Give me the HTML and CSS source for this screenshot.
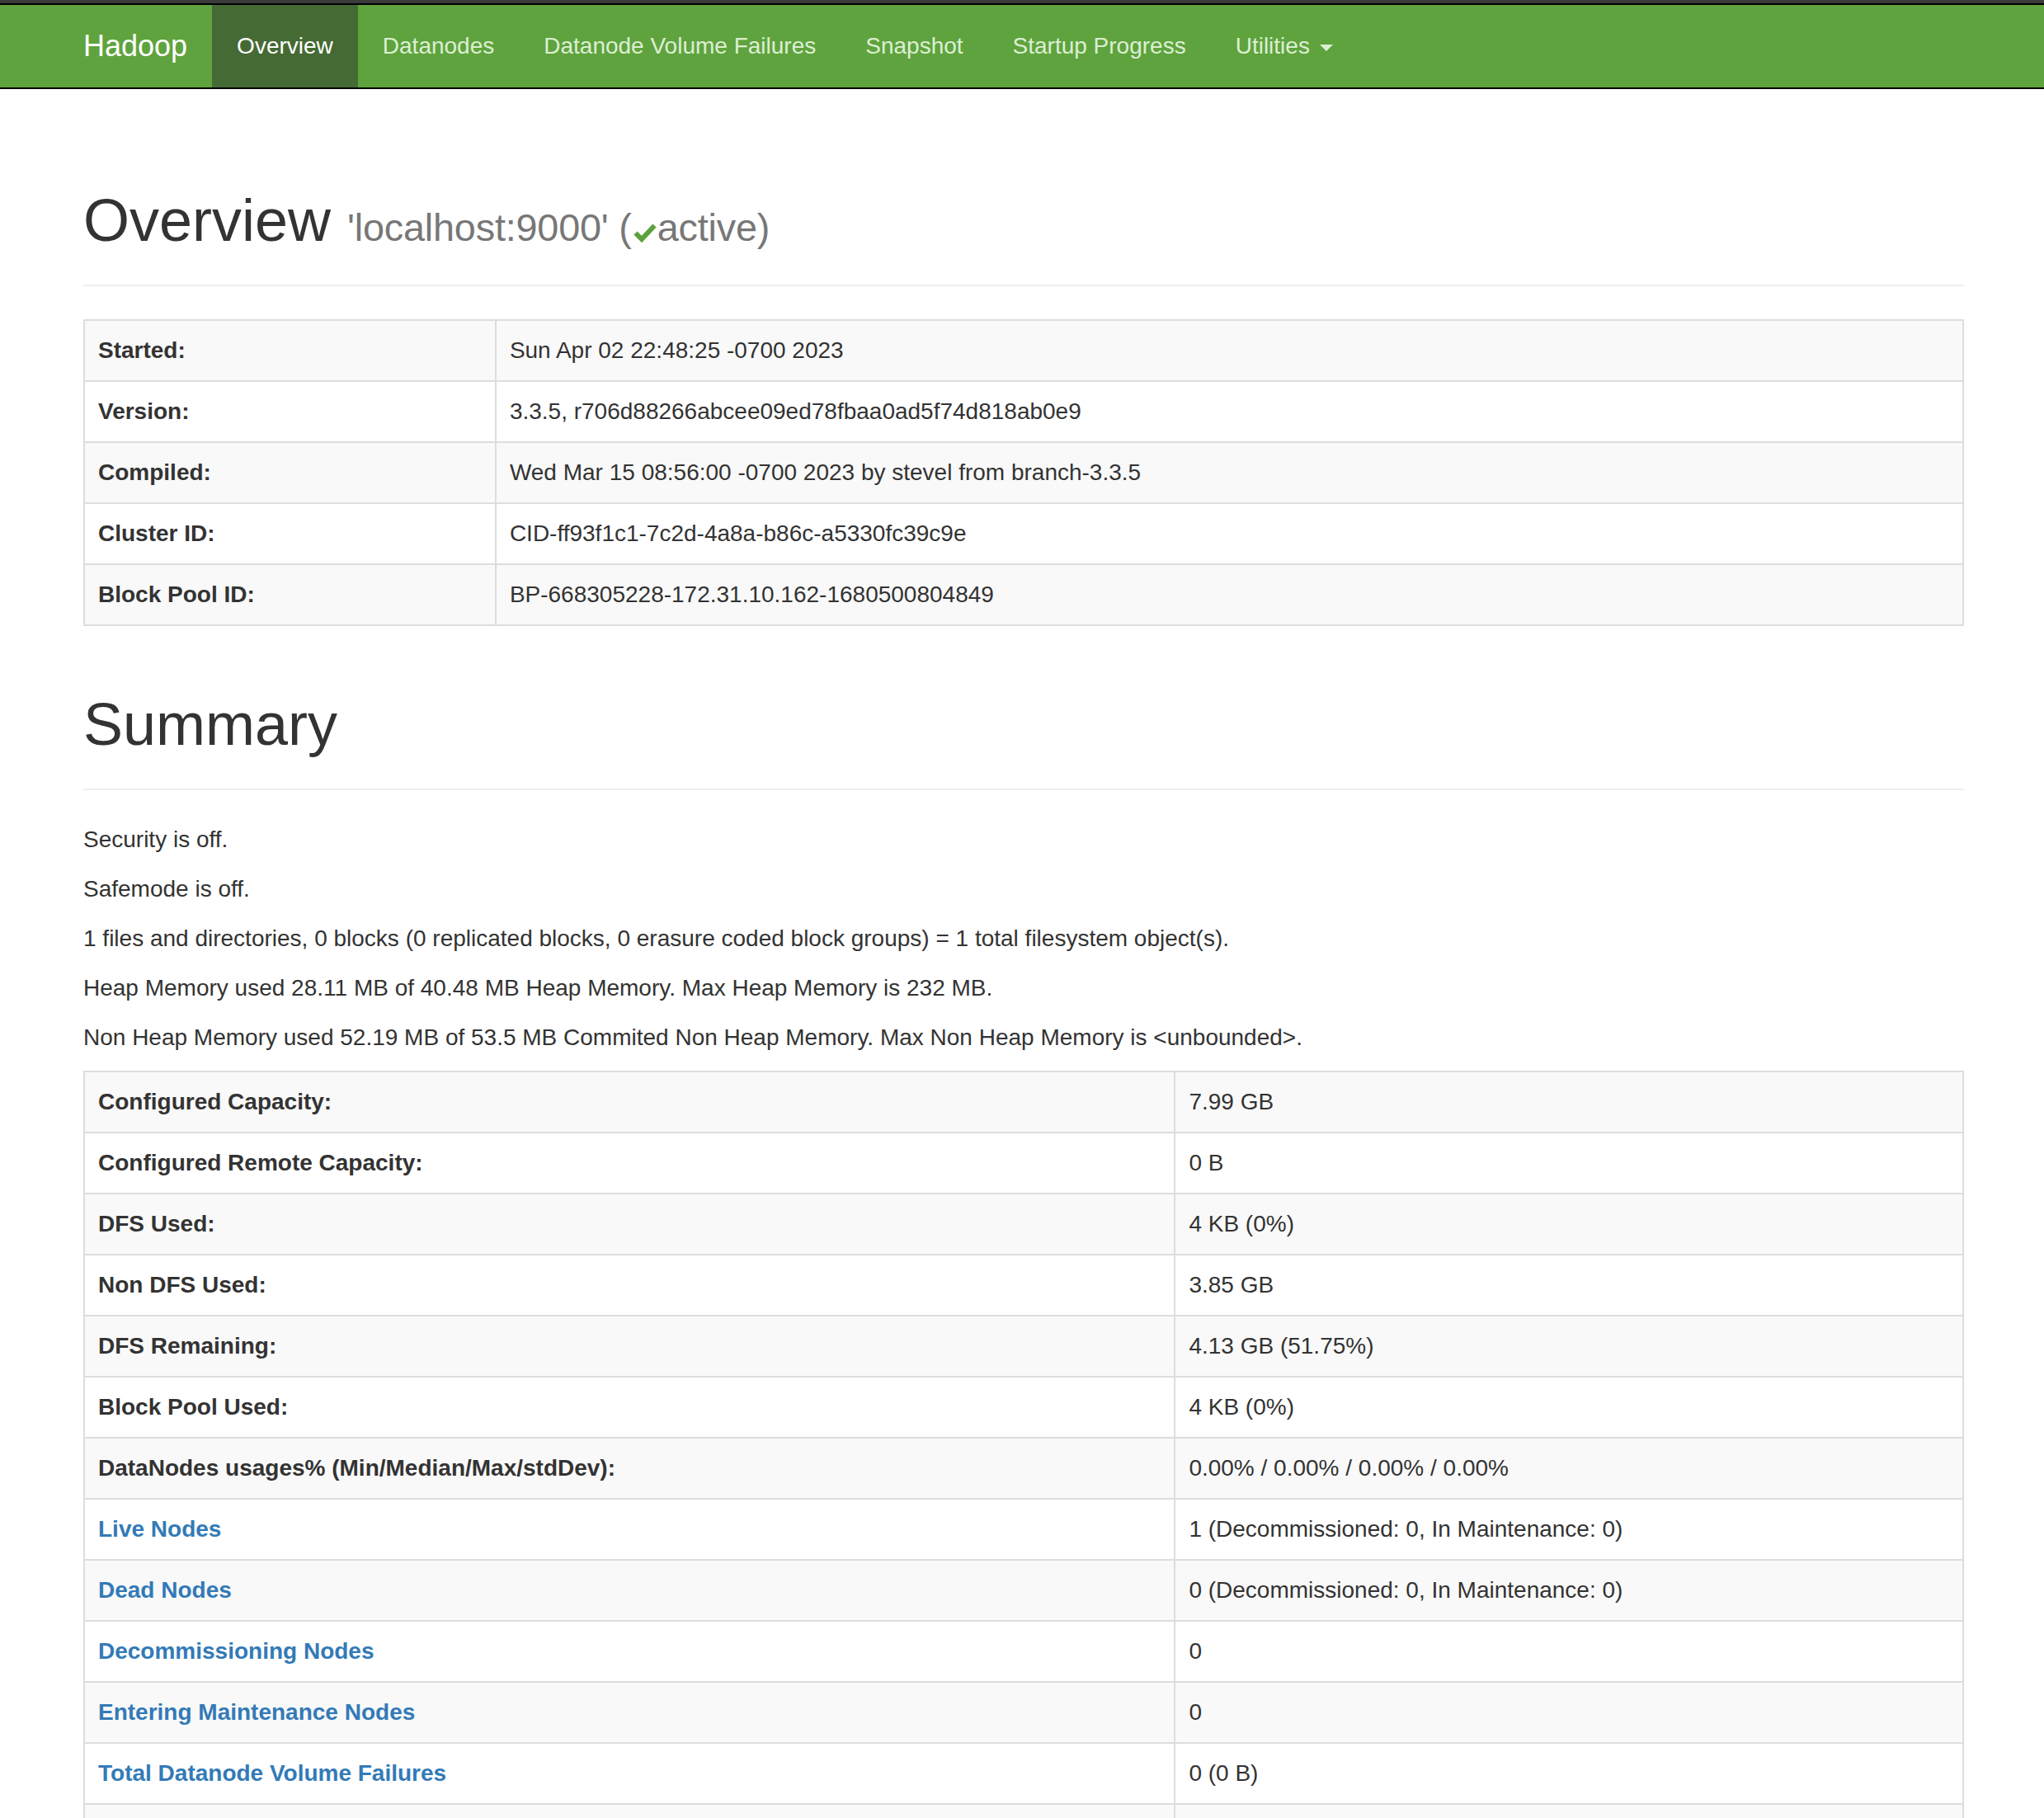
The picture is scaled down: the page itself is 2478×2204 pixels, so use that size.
FILE: index.html
```html
<!DOCTYPE html>
<html lang="en">
<head>
<meta charset="utf-8">
<title>Namenode information</title>
<link rel="stylesheet" href="styles.css">
</head>
<body>
<header class="navbar">
  <div class="navbar-inner">
    <div class="container nav-row">
      <div class="navbar-brand">Hadoop</div>
      <ul class="nav">
        <li class="active"><a href="#tab-overview">Overview</a></li>
        <li><a href="#tab-datanode">Datanodes</a></li>
        <li><a href="#tab-datanode-volume-failures">Datanode Volume Failures</a></li>
        <li><a href="#tab-snapshot">Snapshot</a></li>
        <li><a href="#tab-startup-progress">Startup Progress</a></li>
        <li><a href="#">Utilities <b class="caret"></b></a></li>
      </ul>
    </div>
  </div>
</header>

<main class="container content">
  <div class="page-header">
    <h1>Overview <small>'localhost:9000' (<svg class="ok" viewBox="0 0 28 26" width="28" height="26" aria-hidden="true"><path d="M2.5 13.5 L10 21 L25.5 4.5" fill="none" stroke="#5ca13d" stroke-width="6" stroke-linejoin="miter" stroke-linecap="butt"/></svg>active)</small></h1>
  </div>

  <table class="table info">
    <colgroup><col class="col-key"><col></colgroup>
    <tbody>
      <tr><th>Started:</th><td>Sun Apr 02 22:48:25 -0700 2023</td></tr>
      <tr><th>Version:</th><td>3.3.5, r706d88266abcee09ed78fbaa0ad5f74d818ab0e9</td></tr>
      <tr><th>Compiled:</th><td>Wed Mar 15 08:56:00 -0700 2023 by stevel from branch-3.3.5</td></tr>
      <tr><th>Cluster ID:</th><td>CID-ff93f1c1-7c2d-4a8a-b86c-a5330fc39c9e</td></tr>
      <tr><th>Block Pool ID:</th><td>BP-668305228-172.31.10.162-1680500804849</td></tr>
    </tbody>
  </table>

  <div class="page-header">
    <h1>Summary</h1>
  </div>

  <p>Security is off.</p>
  <p>Safemode is off.</p>
  <p>1 files and directories, 0 blocks (0 replicated blocks, 0 erasure coded block groups) = 1 total filesystem object(s).</p>
  <p>Heap Memory used 28.11 MB of 40.48 MB Heap Memory. Max Heap Memory is 232 MB.</p>
  <p>Non Heap Memory used 52.19 MB of 53.5 MB Commited Non Heap Memory. Max Non Heap Memory is &lt;unbounded&gt;.</p>

  <table class="table summary">
    <colgroup><col class="col-key"><col></colgroup>
    <tbody>
      <tr><th>Configured Capacity:</th><td>7.99 GB</td></tr>
      <tr><th>Configured Remote Capacity:</th><td>0 B</td></tr>
      <tr><th>DFS Used:</th><td>4 KB (0%)</td></tr>
      <tr><th>Non DFS Used:</th><td>3.85 GB</td></tr>
      <tr><th>DFS Remaining:</th><td>4.13 GB (51.75%)</td></tr>
      <tr><th>Block Pool Used:</th><td>4 KB (0%)</td></tr>
      <tr><th>DataNodes usages% (Min/Median/Max/stdDev):</th><td>0.00% / 0.00% / 0.00% / 0.00%</td></tr>
      <tr><th><a href="#tab-datanode">Live Nodes</a></th><td>1 (Decommissioned: 0, In Maintenance: 0)</td></tr>
      <tr><th><a href="#tab-datanode">Dead Nodes</a></th><td>0 (Decommissioned: 0, In Maintenance: 0)</td></tr>
      <tr><th><a href="#tab-datanode">Decommissioning Nodes</a></th><td>0</td></tr>
      <tr><th><a href="#tab-datanode">Entering Maintenance Nodes</a></th><td>0</td></tr>
      <tr><th><a href="#tab-datanode-volume-failures">Total Datanode Volume Failures</a></th><td>0 (0 B)</td></tr>
      <tr class="cut"><th></th><td></td></tr>
    </tbody>
  </table>
</main>
</body>
</html>
```

FILE: styles.css
```css
html {
  overflow: hidden;
}

body {
  margin: 0;
  font-family: "Liberation Sans", Arial, Helvetica, sans-serif;
  font-size: 28px;
  line-height: 40px;
  color: #333;
  background: #fff;
}

a {
  color: #337ab7;
  text-decoration: none;
}

.container {
  width: 2340px;
  box-sizing: border-box;
  padding: 0 28px 0 32px;
  margin: 0 auto;
}

.content {
  padding-top: 40px;
}

/* navbar */
.navbar {
  border-top: 4px solid #3b3b3b;
}

.navbar-inner {
  background: #5fa33e;
  border-top: 2px solid #000;
  border-bottom: 2px solid #000;
}

.nav-row {
  display: flex;
  align-items: stretch;
  height: 100px;
}

.navbar-brand {
  margin-left: -30px;
  padding: 30px;
  font-size: 36px;
  line-height: 40px;
  color: #fff;
}

.nav {
  display: flex;
  list-style: none;
  margin: 0;
  padding: 0;
}

.nav li a {
  display: block;
  padding: 30px;
  line-height: 40px;
  color: #dcefd3;
}

.nav li.active a {
  background: #456a34;
  color: #fff;
}

.caret {
  display: inline-block;
  width: 0;
  height: 0;
  margin-left: 4px;
  vertical-align: middle;
  border-top: 8px solid #dcefd3;
  border-left: 8px solid transparent;
  border-right: 8px solid transparent;
}

/* headers */
.page-header {
  margin: 80px 0 40px;
  padding-bottom: 18px;
  border-bottom: 2px solid #eee;
}

h1 {
  margin: 40px 0 20px;
  font-size: 72px;
  line-height: 1.1;
  font-weight: 500;
}

h1 small {
  font-size: 65%;
  color: #777;
  font-weight: 400;
  line-height: 1;
  letter-spacing: -0.2px;
}

.ok {
  vertical-align: -3px;
  margin: 0 1px 0 2px;
}

p {
  margin: 0 0 20px;
}

/* tables */
.table {
  width: 100%;
  table-layout: fixed;
  border-collapse: collapse;
  border: 2px solid #ddd;
  margin-bottom: 40px;
}

.table th,
.table td {
  padding: 16px;
  line-height: 40px;
  border: 2px solid #ddd;
  text-align: left;
  vertical-align: top;
}

.table th {
  font-weight: 700;
}

.table tbody tr:nth-of-type(odd) {
  background: #f9f9f9;
}

.table .cut th,
.table .cut td {
  height: 40px;
}

.info .col-key {
  width: 21.9%;
}

.summary .col-key {
  width: 58.05%;
}
```
